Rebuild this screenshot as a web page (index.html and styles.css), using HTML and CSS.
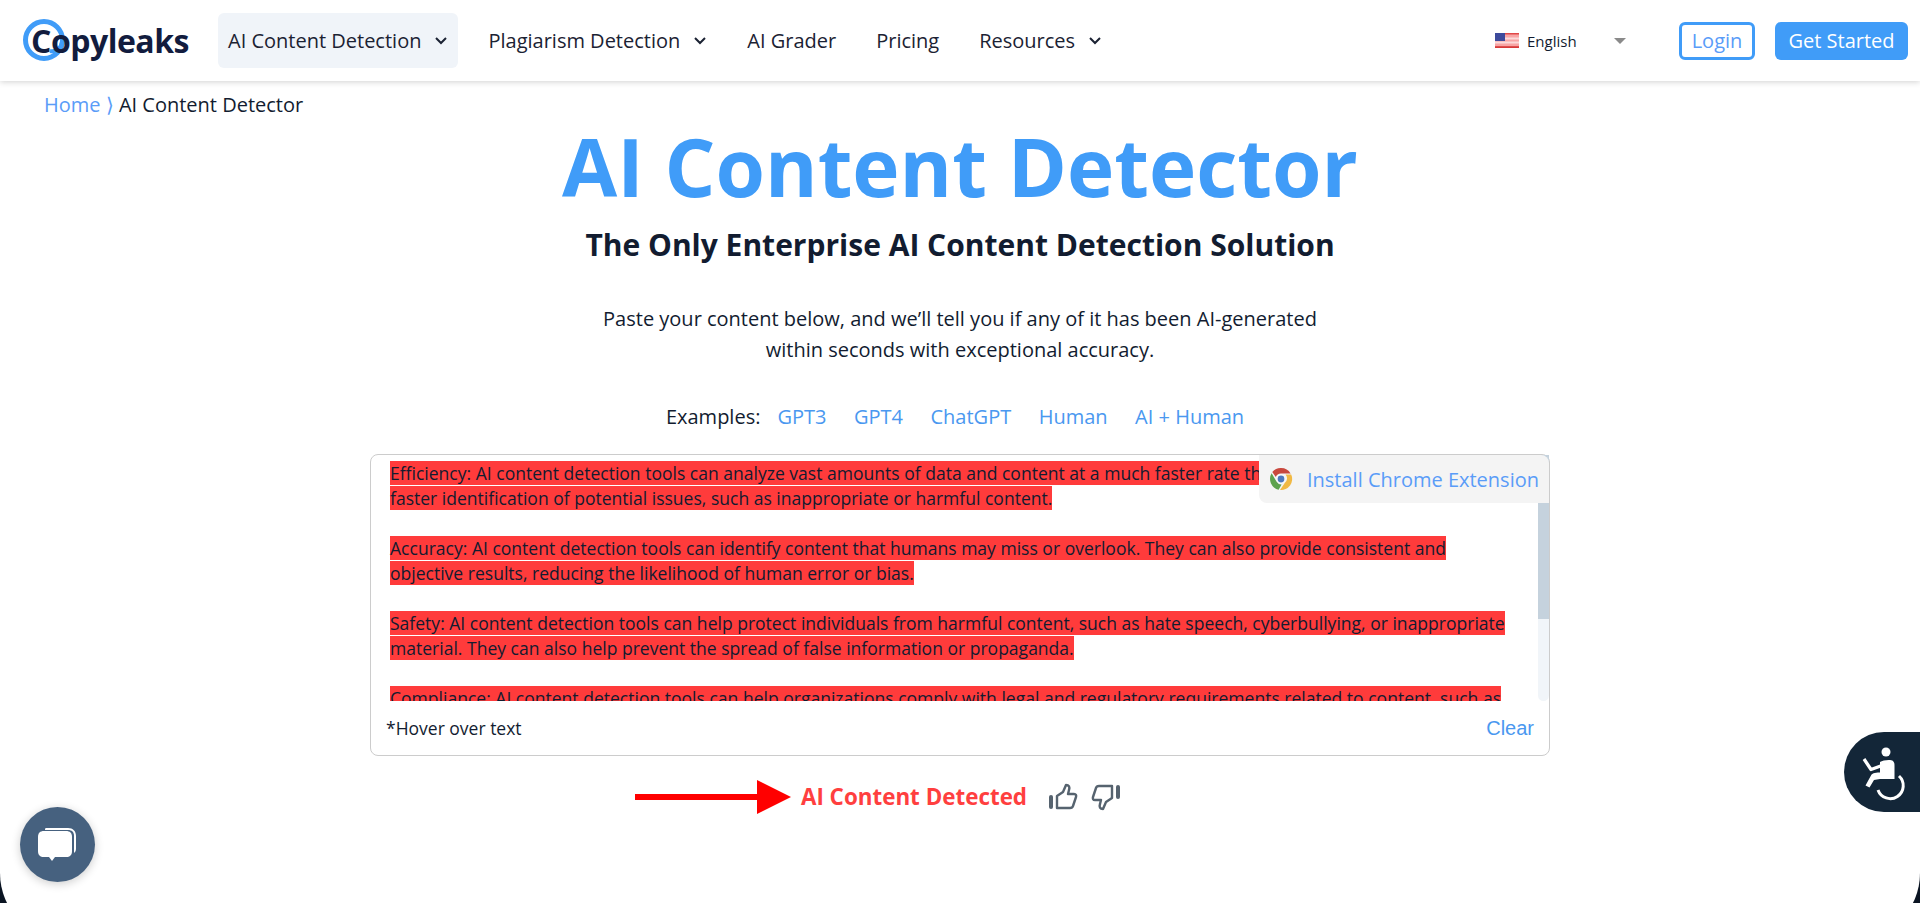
FILE: index.html
```html
<!DOCTYPE html>
<html lang="en">
<head>
    <meta charset="UTF-8">
    <meta name="viewport" content="width=device-width, initial-scale=1.0">
    <title>AI Content Detector</title>
    <link rel="stylesheet" href="styles.css">
</head>
<body>
    <div class="header">
        <a class="logo" href="#">
            <svg class="logo-ring" width="44" height="44" viewBox="0 0 44 44"><circle cx="22" cy="22" r="18.500" fill="none" stroke="#409cf8" stroke-width="5"/><path d="M40 24c-1 7-6 10-12 9" fill="none" stroke="#409cf8" stroke-width="4"/></svg>
            <span class="logo-text">Copyleaks</span>
        </a>
        <div class="nav">
            <a class="nav-item active" href="#">AI Content Detection <svg class="chev" width="14" height="9" viewBox="0 0 14 9"><path d="M2 2l5 5 5-5" fill="none" stroke="#1b2233" stroke-width="2"/></svg></a>
            <a class="nav-item" href="#">Plagiarism Detection <svg class="chev" width="14" height="9" viewBox="0 0 14 9"><path d="M2 2l5 5 5-5" fill="none" stroke="#1b2233" stroke-width="2"/></svg></a>
            <a class="nav-item" href="#">AI Grader</a>
            <a class="nav-item" href="#">Pricing</a>
            <a class="nav-item" href="#">Resources <svg class="chev" width="14" height="9" viewBox="0 0 14 9"><path d="M2 2l5 5 5-5" fill="none" stroke="#1b2233" stroke-width="2"/></svg></a>
        </div>
        <div class="lang">
            <svg width="24" height="15" viewBox="0 0 24 15">
                <rect width="24" height="15" fill="#f8a5a5"/>
                <rect y="0" width="24" height="1.500" fill="#e04848"/>
                <rect y="4.500" width="24" height="2" fill="#fbdada"/>
                <rect y="8.500" width="24" height="2" fill="#fbdada"/>
                <rect y="13.200" width="24" height="1.800" fill="#d83a3a"/>
                <rect width="10" height="8" fill="#3d4a9c"/>
            </svg>
            <span class="lang-name">English</span>
            <span class="lang-caret"></span>
        </div>
        <a class="btn-login" href="#">Login</a>
        <a class="btn-start" href="#">Get Started</a>
    </div>

    <div class="breadcrumb"><a href="#">Home ⟩</a> AI Content Detector</div>

    <div class="container">
        <h1>AI Content Detector</h1>
        <h2>The Only Enterprise AI Content Detection Solution</h2>
        <p class="intro">Paste your content below, and we’ll tell you if any of it has been AI-generated<br>within seconds with exceptional accuracy.</p>

        <div class="examples">
            <span>Examples:</span>
            <a href="#">GPT3</a>
            <a href="#">GPT4</a>
            <a href="#">ChatGPT</a>
            <a href="#">Human</a>
            <a href="#">AI + Human</a>
        </div>

        <div class="box">
            <div class="box-top">
                <div class="box-text">
                    <p><mark>Efficiency: AI content detection tools can analyze vast amounts of data and content at a much faster rate than humans, allowing for<br>faster identification of potential issues, such as inappropriate or harmful content.</mark></p>
                    <p><mark>Accuracy: AI content detection tools can identify content that humans may miss or overlook. They can also provide consistent and<br>objective results, reducing the likelihood of human error or bias.</mark></p>
                    <p><mark>Safety: AI content detection tools can help protect individuals from harmful content, such as hate speech, cyberbullying, or inappropriate<br>material. They can also help prevent the spread of false information or propaganda.</mark></p>
                    <p><mark>Compliance: AI content detection tools can help organizations comply with legal and regulatory requirements related to content, such as</mark></p>
                </div>
                <div class="scrollbar"><div class="scroll-thumb"></div></div>
            </div>
            <div class="box-footer">
                <span>*Hover over text</span>
                <a class="clear" href="#">Clear</a>
            </div>
            <a class="install" href="#">
                <svg width="24" height="24" viewBox="0 0 24 24">
                    <path d="M12 1a11 11 0 0 1 9.600 5.500H12a5.500 5.500 0 0 0-5.200 3.600L3.300 4.900A11 11 0 0 1 12 1z" fill="#c9483d"/>
                    <path d="M2.600 6.300l5 8.500a5.500 5.500 0 0 0 5 2.700l-3 5.200A11 11 0 0 1 2.600 6.300z" fill="#5da24e"/>
                    <path d="M22.200 7.600A11 11 0 0 1 11 23l4.900-7.200A5.500 5.500 0 0 0 16.500 7.600z" fill="#f1b944"/>
                    <circle cx="12" cy="12" r="4.400" fill="#fff"/>
                    <circle cx="12" cy="12" r="3.400" fill="#4f79bd"/>
                </svg>
                <span>Install Chrome Extension</span>
            </a>
        </div>

        <div class="result">
            <svg width="156" height="34" viewBox="0 0 156 34"><rect y="14" width="123" height="6" fill="#ff0000"/><path d="M122 0l34 17-34 17z" fill="#ff0000"/></svg>
            <span class="result-label">AI Content Detected</span>
            <svg class="thumb" width="30" height="28" viewBox="0 0 30 28"><rect x="1" y="12" width="4" height="14" rx="2" fill="#56636f"/><path d="M9 13l6-4 3-7c3 0 4 2 3 5l-1 4h6c2 0 2.500 1.500 2 3l-3 9c-.4 1.500-1 2-3 2H9z" fill="none" stroke="#56636f" stroke-width="2.400" stroke-linejoin="round"/></svg>
            <svg class="thumb" width="30" height="28" viewBox="0 0 30 28"><rect x="25" y="2" width="4" height="14" rx="2" fill="#56636f"/><path d="M21 15l-6 4-3 7c-3 0-4-2-3-5l1-4H4c-2 0-2.500-1.500-2-3l3-9c.4-1.500 1-2 3-2h13z" fill="none" stroke="#56636f" stroke-width="2.400" stroke-linejoin="round"/></svg>
        </div>
    </div>

    <div class="chat">
        <svg width="44" height="40" viewBox="0 0 44 40">
            <path d="M10 3h22c5 0 8 3 8 8v13c0 2-1 3-2 4V11c0-4-2-6-6-6H9c0-1 0-2 1-2z" fill="#fff"/>
            <path d="M8 6h22c4 0 6 2 6 6v14c0 4-2 6-6 6H19l-3 4-3-4H8c-4 0-6-2-6-6V12c0-4 2-6 6-6z" fill="#fff"/>
        </svg>
    </div>

    <div class="a11y">
        <svg width="76" height="80" viewBox="0 0 76 80">
            <circle cx="42" cy="20" r="4.500" fill="#fff"/>
            <path d="M20 27l7 10.500 11-4" fill="none" stroke="#fff" stroke-width="3.200" stroke-linejoin="round"/>
            <path d="M36 30c3-2 11-3 13-1 1.500 1.500 1.500 3 1.500 5v13H36l-6 1-4.500 7.500-4-2 5.500-10c1-2 3-3 9-3z" fill="#fff"/>
            <path d="M34 58A13 13 0 1 0 55 44" fill="none" stroke="#fff" stroke-width="3"/>
        </svg>
    </div>

    <div class="corners"></div>
</body>
</html>
```

FILE: styles.css
```css
html, body {
    height: 100%;
}
body {
    font-family: "Open Sans", sans-serif;
    background-color: #fff;
    color: #121c30;
    margin: 0;
    padding: 0;
    overflow: hidden;
}
a {
    text-decoration: none;
}

/* header */
.header {
    display: flex;
    align-items: center;
    height: 81px;
    padding: 0 12px 0 22px;
    box-shadow: 0 1px 6px rgba(0, 0, 0, 0.18);
    box-sizing: border-box;
}
.logo {
    position: relative;
    width: 196px;
    flex: none;
    padding-left: 9px;
    box-sizing: border-box;
    font-size: 32px;
    font-weight: 700;
    letter-spacing: -0.5px;
    color: #121c3e;
}
.logo-text {
    position: relative;
}
.logo-ring {
    position: absolute;
    left: 0;
    top: -1px;
}
.nav {
    display: flex;
    align-items: center;
    gap: 20px;
}
.nav-item {
    display: flex;
    align-items: center;
    gap: 13px;
    height: 55px;
    padding: 0 10px;
    font-size: 20px;
    color: #1b2233;
    border-radius: 6px;
}
.nav-item.active {
    background-color: #f0f4f9;
}
.lang {
    display: flex;
    align-items: center;
    margin-left: auto;
    font-size: 15px;
}
.lang-name {
    margin-left: 8px;
    width: 87px;
}
.lang-caret {
    border-left: 6px solid transparent;
    border-right: 6px solid transparent;
    border-top: 6px solid #8a8a8a;
}
.btn-login, .btn-start {
    display: flex;
    align-items: center;
    justify-content: center;
    height: 38px;
    font-size: 20px;
    border-radius: 6px;
    box-sizing: border-box;
}
.btn-login {
    width: 76px;
    margin-left: 53px;
    border: 3px solid #409cf8;
    color: #5a9cf8;
}
.btn-start {
    width: 133px;
    margin-left: 20px;
    background-color: #409cf8;
    color: #fff;
}

.breadcrumb {
    padding: 10px 0 0 44px;
    font-size: 20px;
    line-height: 27px;
}
.breadcrumb a {
    color: #5a9cf8;
}

/* main column */
.container {
    text-align: center;
}
h1 {
    margin: 0;
    font-size: 80px;
    line-height: 96px;
    font-weight: 700;
    color: #409cf8;
}
h2 {
    margin: 11px 0 0;
    font-size: 30px;
    line-height: 40px;
    font-weight: 700;
}
.intro {
    margin: 38px 0 0;
    font-size: 20px;
    line-height: 31px;
}
.examples {
    display: flex;
    justify-content: center;
    gap: 27.500px;
    margin-top: 38px;
    font-size: 20px;
    line-height: 28px;
    padding-right: 10px;
}
.examples span {
    margin-right: -10.500px;
}
.examples a {
    color: #4a98f0;
}

/* text box */
.box {
    position: relative;
    width: 1180px;
    height: 302px;
    margin: 23px auto 0;
    border: 1px solid #ccc;
    border-radius: 8px;
    box-sizing: border-box;
    text-align: left;
}
.box-top {
    display: flex;
    height: 246px;
}
.box-text {
    flex: 1;
    overflow: hidden;
    padding: 6px 0 0 19px;
    white-space: nowrap;
    font-size: 17.540px;
    line-height: 25px;
}
.box-text p {
    margin: 0 0 25px;
}
.box-text mark {
    background-color: #ff3b3b;
    color: #121c30;
}
.scrollbar {
    display: flex;
    flex: none;
    width: 11px;
    background-color: #f1f5f9;
    border-radius: 0 0 6px 6px;
}
.scroll-thumb {
    width: 100%;
    height: 164px;
    background-color: #c5d2dd;
}
.box-footer {
    display: flex;
    justify-content: space-between;
    align-items: center;
    height: 54px;
    padding: 0 15px;
    font-size: 17.500px;
}
.clear {
    font-family: "Liberation Sans", sans-serif;
    font-size: 20px;
    color: #4a98f0;
}
.install {
    position: absolute;
    top: 0;
    right: 0;
    display: flex;
    align-items: center;
    gap: 14px;
    height: 48px;
    padding: 0 10px;
    background-color: #f4f4f4;
    border-radius: 0 8px 0 8px;
    font-size: 20px;
    color: #5a9cf8;
}

/* result row */
.result {
    display: flex;
    justify-content: center;
    align-items: center;
    height: 40px;
    margin-top: 21px;
    padding-right: 151px;
}
.result-label {
    margin: 0 21px 2px 10px;
    font-size: 22.400px;
    font-weight: 700;
    color: #ff3f3f;
}
.thumb {
    margin-right: 13px;
}

/* floating widgets */
.chat {
    position: fixed;
    left: 20px;
    bottom: 21px;
    display: flex;
    align-items: center;
    justify-content: center;
    width: 75px;
    height: 75px;
    background-color: #46617f;
    border-radius: 50%;
    box-shadow: 0 2px 10px rgba(0, 0, 0, 0.2);
}
.a11y {
    position: fixed;
    right: 0;
    top: 732px;
    width: 76px;
    height: 80px;
    background-color: #132638;
    border-radius: 40px 0 0 40px;
}
.corners {
    position: fixed;
    left: 0;
    right: 0;
    bottom: -38px;
    height: 140px;
    border-radius: 0 0 68px 68px;
    box-shadow: 0 0 0 70px #0a1422;
    clip-path: inset(0);
    pointer-events: none;
}
```
